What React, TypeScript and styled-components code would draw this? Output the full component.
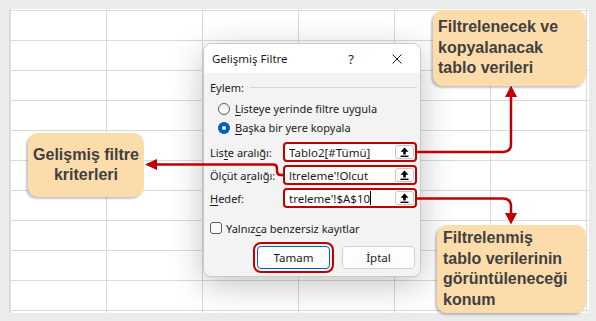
import React from 'react';
import styled, { createGlobalStyle } from 'styled-components';

const GlobalStyle = createGlobalStyle`
  html, body {
    margin: 0;
    padding: 0;
    background: #ebebeb;
  }
  body {
    font-family: "Noto Sans", "Liberation Sans", sans-serif;
  }
`;

const RED = '#c00000';

const Page = styled.div`
  position: relative;
  width: 596px;
  height: 321px;
  padding: 9px;
  box-sizing: border-box;
  overflow: hidden;
  background: #ebebeb;
`;

const Sheet = styled.div`
  width: 580px;
  height: 304px;
  box-sizing: border-box;
  border-left: 1px solid #dadada;
  background-color: #ffffff;
  background-image:
    linear-gradient(to right, #dadada 1px, transparent 1px),
    linear-gradient(to bottom, #dadada 1px, transparent 1px);
  background-size: 96px 30px;
  background-position: 0 1px;
`;

const Dialog = styled.div`
  position: absolute;
  left: 203px;
  top: 43px;
  width: 218px;
  height: 234px;
  box-sizing: border-box;
  display: flex;
  flex-direction: column;
  border: 1px solid #c9c9c9;
  border-radius: 8px;
  overflow: hidden;
  background: #f3f3f3;
  box-shadow: 0 8px 34px rgba(0, 0, 0, 0.24);
  color: #1b1b1b;
  font-size: 11px;
`;

const TitleBar = styled.div`
  display: flex;
  align-items: center;
  height: 29px;
  padding-left: 8px;
  background: #ffffff;
  font-size: 11.5px;
`;

const Title = styled.span`
  flex: 1;
`;

const TitleButton = styled.span`
  width: 46px;
  height: 29px;
  display: flex;
  align-items: center;
  justify-content: center;
  font-size: 13px;
`;

const Body = styled.div`
  flex: 1;
  display: flex;
  flex-direction: column;
  padding: 6px 3px 0 6px;
`;

const GroupHeader = styled.div`
  display: flex;
  align-items: center;
  gap: 6px;
  height: 16px;
`;

const GroupRule = styled.span`
  flex: 1;
  height: 1px;
  background: #d6d6d6;
`;

const RadioList = styled.div`
  display: flex;
  flex-direction: column;
  margin-top: 4px;
  padding-left: 8px;
`;

const OptionRow = styled.label`
  display: flex;
  align-items: center;
  gap: 5px;
  height: 19px;
`;

const RadioDot = styled.span<{ $checked?: boolean }>`
  width: 12px;
  height: 12px;
  box-sizing: border-box;
  border-radius: 50%;
  border: ${p => (p.$checked ? '4px solid #005fb8' : '1px solid #5c5c5c')};
  background: ${p => (p.$checked ? '#ffffff' : '#f7f7f7')};
`;

const Key = styled.span`
  text-decoration: underline;
  text-underline-offset: 2px;
`;

const FieldList = styled.div`
  display: flex;
  flex-direction: column;
  gap: 3px;
  margin-top: 5px;
`;

const FieldRow = styled.div`
  display: flex;
  align-items: center;
`;

const FieldLabel = styled.span`
  width: 73px;
`;

const RefInput = styled.div<{ $marked?: boolean }>`
  width: 134px;
  height: 20px;
  box-sizing: border-box;
  display: flex;
  align-items: center;
  padding: 0 1px 0 4px;
  border: 2px solid ${p => (p.$marked ? RED : '#c4c4c4')};
  border-radius: 4px;
  background: #ffffff;
  font-size: 11.5px;
  white-space: nowrap;
  overflow: hidden;
`;

const RefText = styled.span`
  flex: 1;
  display: flex;
  align-items: center;
`;

const Caret = styled.span`
  width: 1px;
  height: 14px;
  background: #000;
`;

const CollapseButton = styled.span`
  width: 19px;
  height: 14px;
  box-sizing: border-box;
  display: flex;
  align-items: center;
  justify-content: center;
  border: 1px solid #c6c6c6;
  border-radius: 3px;
  background: #ffffff;
`;

const CheckRow = styled.label`
  display: flex;
  align-items: center;
  gap: 4px;
  height: 16px;
  margin-top: 12px;
`;

const CheckBox = styled.span`
  width: 12px;
  height: 12px;
  box-sizing: border-box;
  border: 1px solid #5c5c5c;
  border-radius: 3px;
  background: #f7f7f7;
`;

const ButtonRow = styled.div`
  display: flex;
  justify-content: flex-end;
  gap: 12px;
  margin-top: 10px;
  padding-right: 2px;
`;

const DialogButton = styled.button<{ $primary?: boolean; $marked?: boolean }>`
  width: 73px;
  height: 23px;
  box-sizing: border-box;
  border: 1px solid ${p => (p.$primary ? '#005fb8' : '#d0d0d0')};
  border-radius: 4px;
  background: #fdfdfd;
  color: #1b1b1b;
  font-family: inherit;
  font-size: 11.5px;
  padding: 0;
  outline: ${p => (p.$marked ? `2px solid ${RED}` : 'none')};
  outline-offset: 2px;
`;

const Callout = styled.div<{ $center?: boolean }>`
  position: absolute;
  box-sizing: border-box;
  display: flex;
  flex-direction: column;
  justify-content: center;
  padding: 0 5px;
  border-radius: 10px;
  background: #fddcab;
  box-shadow: -2px 2px 2px rgba(0, 0, 0, 0.22);
  color: #404040;
  font-family: "Liberation Sans", Arial, sans-serif;
  font-weight: bold;
  font-size: 16px;
  line-height: 20.5px;
  text-align: ${p => (p.$center ? 'center' : 'left')};
`;

const Connectors = styled.svg`
  position: absolute;
  left: 0;
  top: 0;
  pointer-events: none;
`;

function UploadIcon() {
  return (
    <svg width="9" height="10" viewBox="0 0 9 10">
      <path d="M4.5 0.5 L8.5 4.8 H5.8 V7.6 H3.2 V4.8 H0.5 Z" fill="#000" />
      <rect x="0.5" y="8.6" width="8" height="1.4" fill="#000" />
    </svg>
  );
}

function CloseIcon() {
  return (
    <svg width="10" height="10" viewBox="0 0 10 10">
      <path d="M0.5 0.5 L9.5 9.5 M9.5 0.5 L0.5 9.5" stroke="#1b1b1b" strokeWidth="1" />
    </svg>
  );
}

export default function App() {
  return (
    <>
      <GlobalStyle />
      <Page>
        <Sheet />

        <Dialog>
          <TitleBar>
            <Title>Gelişmiş Filtre</Title>
            <TitleButton>?</TitleButton>
            <TitleButton>
              <CloseIcon />
            </TitleButton>
          </TitleBar>
          <Body>
            <GroupHeader>
              <span>Eylem:</span>
              <GroupRule />
            </GroupHeader>
            <RadioList>
              <OptionRow>
                <RadioDot />
                <span><Key>L</Key>isteye yerinde filtre uygula</span>
              </OptionRow>
              <OptionRow>
                <RadioDot $checked />
                <span><Key>B</Key>aşka bir yere kopyala</span>
              </OptionRow>
            </RadioList>
            <FieldList>
              <FieldRow>
                <FieldLabel>Lis<Key>t</Key>e aralığı:</FieldLabel>
                <RefInput $marked>
                  <RefText>Tablo2[#Tümü]</RefText>
                  <CollapseButton><UploadIcon /></CollapseButton>
                </RefInput>
              </FieldRow>
              <FieldRow>
                <FieldLabel>Ölçüt a<Key>r</Key>alığı:</FieldLabel>
                <RefInput $marked>
                  <RefText>ltreleme'!Olcut</RefText>
                  <CollapseButton><UploadIcon /></CollapseButton>
                </RefInput>
              </FieldRow>
              <FieldRow>
                <FieldLabel><Key>H</Key>edef:</FieldLabel>
                <RefInput $marked>
                  <RefText>treleme'!$A$10<Caret /></RefText>
                  <CollapseButton><UploadIcon /></CollapseButton>
                </RefInput>
              </FieldRow>
            </FieldList>
            <CheckRow>
              <CheckBox />
              <span>Yalnız<Key>c</Key>a benzersiz kayıtlar</span>
            </CheckRow>
            <ButtonRow>
              <DialogButton $primary $marked>Tamam</DialogButton>
              <DialogButton>İptal</DialogButton>
            </ButtonRow>
          </Body>
        </Dialog>

        <Connectors width="596" height="321" viewBox="0 0 596 321">
          <g fill="none" stroke={RED} strokeWidth="2.5">
            <path d="M417 152 H503 Q511 152 511 144 V96" />
            <path d="M283 175 H281 Q277 175 277 171 V168.5 Q277 164.5 273 164.5 H156" />
            <path d="M417 198.5 H503 Q511 198.5 511 206.5 V214" />
          </g>
          <g fill={RED}>
            <polygon points="505,97 517,97 511,85.5" />
            <polygon points="157,159 157,170 145,164.5" />
            <polygon points="505,213 517,213 511,224.5" />
          </g>
        </Connectors>

        <Callout style={{ left: 433, top: 10, width: 153, height: 76 }}>
          <span>Filtrelenecek ve</span>
          <span>kopyalanacak</span>
          <span>tablo verileri</span>
        </Callout>
        <Callout $center style={{ left: 28, top: 133, width: 116, height: 64 }}>
          <span>Gelişmiş filtre</span>
          <span>kriterleri</span>
        </Callout>
        <Callout style={{ left: 437, top: 225, width: 149, height: 88, paddingLeft: 6 }}>
          <span>Filtrelenmiş</span>
          <span>tablo verilerinin</span>
          <span>görüntüleneceği</span>
          <span>konum</span>
        </Callout>
      </Page>
    </>
  );
}
